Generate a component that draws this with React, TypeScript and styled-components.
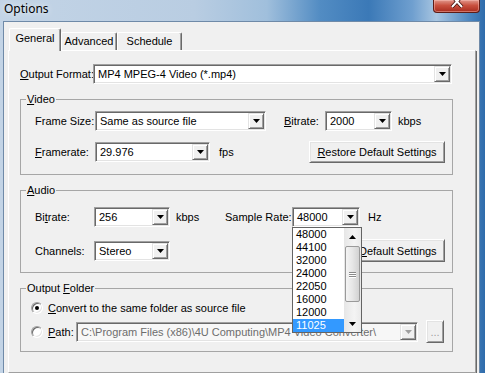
import React from 'react';
import styled, { createGlobalStyle } from 'styled-components';

const GlobalStyle = createGlobalStyle`
  html, body {
    margin: 0;
    padding: 0;
    overflow: hidden;
  }
  body {
    font-family: "Liberation Sans", Arial, sans-serif;
    font-size: 11px;
    color: #000;
  }
  * {
    box-sizing: border-box;
  }
`;

const Window = styled.div`
  width: 485px;
  height: 373px;
  overflow: hidden;
  display: flex;
  flex-direction: column;
  background: linear-gradient(
    90deg,
    #c3d4e6 0%,
    #b9cde2 40%,
    #a0bfdc 55%,
    #528cc3 66%,
    #3b79b7 76%,
    #6f9fcf 85%,
    #a9c6e1 90%,
    #4a84bf 97%,
    #2f6cab 100%
  );
`;

const TitleBar = styled.div`
  height: 21px;
  flex: none;
  display: flex;
  justify-content: space-between;
  align-items: flex-start;
`;

const Title = styled.div`
  font-family: "Noto Sans", "Open Sans", sans-serif;
  font-size: 12px;
  line-height: 16px;
  padding: 1px 0 0 4px;
  text-shadow: 0 0 6px rgba(255, 255, 255, 0.9);
`;

const CloseButton = styled.div`
  width: 47px;
  height: 13px;
  margin-right: 5px;
  border: 1px solid #5e1c16;
  border-top: none;
  border-radius: 0 0 4px 4px;
  background: linear-gradient(#e0978b, #c9513f 45%, #a72b1d);
  box-shadow: inset 0 0 0 1px rgba(255, 200, 190, 0.45);
  display: flex;
  justify-content: center;
  align-items: flex-start;
`;

const Client = styled.div`
  flex: 1;
  margin: 0 5px 0 3px;
  background: #f0f0f0;
  border: 1px solid #6f8aa8;
  border-bottom: none;
  display: flex;
  flex-direction: column;
  padding-top: 6px;
`;

const TabRow = styled.div`
  display: flex;
  align-items: flex-end;
  height: 22px;
  padding-left: 5px;
  flex: none;
`;

const Tab = styled.div<{ $w: number; $active?: boolean }>`
  width: ${(p) => p.$w}px;
  height: ${(p) => (p.$active ? 23 : 18)}px;
  margin-bottom: ${(p) => (p.$active ? -1 : 0)}px;
  border: 1px solid;
  border-color: #fff #696969 transparent #fff;
  border-bottom: none;
  border-radius: 2px 2px 0 0;
  box-shadow: inset -1px 0 0 #a0a0a0;
  background: #f0f0f0;
  text-align: center;
  line-height: 13px;
  padding-top: ${(p) => (p.$active ? 3 : 2)}px;
  position: relative;
  z-index: ${(p) => (p.$active ? 1 : 0)};
`;

const Panel = styled.div`
  flex: 1;
  margin: 0 3px 0 4px;
  border: 1px solid;
  border-color: #fff #a0a0a0 #a0a0a0 #fff;
  box-shadow: 1px 1px 0 #696969;
  padding: 13px 22px 0 11px;
`;

const Row = styled.div<{ $h?: number; $gap?: number }>`
  display: flex;
  align-items: center;
  height: ${(p) => p.$h ?? 20}px;
  margin-top: ${(p) => p.$gap ?? 0}px;
`;

const Label = styled.span<{ $w?: number; $ml?: number; $dim?: boolean }>`
  flex: none;
  white-space: nowrap;
  width: ${(p) => (p.$w ? `${p.$w}px` : 'auto')};
  margin-left: ${(p) => p.$ml ?? 0}px;
  color: ${(p) => (p.$dim ? '#6d6d6d' : '#000')};
`;

const Combo = styled.div<{ $w: number; $disabled?: boolean }>`
  flex: none;
  width: ${(p) => p.$w}px;
  height: 20px;
  display: flex;
  align-items: center;
  border: 1px solid;
  border-color: #a0a0a0 #fff #fff #a0a0a0;
  box-shadow: inset 1px 1px 0 #696969, inset -1px -1px 0 #e3e3e3;
  background: ${(p) => (p.$disabled ? '#f7f7f7' : '#fff')};
  color: ${(p) => (p.$disabled ? '#6d6d6d' : '#000')};
  padding: 1px;
`;

const ComboText = styled.span`
  flex: 1;
  padding-left: 3px;
  white-space: nowrap;
  overflow: hidden;
`;

const ArrowButton = styled.span`
  flex: none;
  width: 16px;
  height: 16px;
  border: 1px solid;
  border-color: #e3e3e3 #696969 #696969 #e3e3e3;
  box-shadow: inset 1px 1px 0 #fff, inset -1px -1px 0 #a0a0a0;
  background: #f0f0f0;
  display: flex;
  align-items: center;
  justify-content: center;
`;

const PushButton = styled.div<{ $w: number; $h: number; $dim?: boolean }>`
  flex: none;
  width: ${(p) => p.$w}px;
  height: ${(p) => p.$h}px;
  margin-left: auto;
  border: 1px solid;
  border-color: #fff #696969 #696969 #fff;
  box-shadow: inset 1px 1px 0 #e3e3e3, inset -1px -1px 0 #a0a0a0;
  background: #f0f0f0;
  color: ${(p) => (p.$dim ? '#a0a0a0' : '#000')};
  display: flex;
  align-items: center;
  justify-content: center;
  white-space: nowrap;
`;

const Group = styled.fieldset<{ $pad: string }>`
  margin: 9px 0 0;
  padding: ${(p) => p.$pad};
  min-width: 0;
  border: 1px solid #a6a6a6;
`;

const Legend = styled.legend<{ $ml: number }>`
  padding: 0 1px;
  margin-left: ${(p) => p.$ml}px;
  line-height: 13px;
`;

const Radio = styled.span`
  flex: none;
  width: 12px;
  height: 12px;
  border-radius: 50%;
  border: 1px solid;
  border-color: #a0a0a0 #fff #fff #a0a0a0;
  box-shadow: inset 1px 1px 0 #696969, inset -1px -1px 0 #e3e3e3;
  background: #fff;
  display: flex;
  align-items: center;
  justify-content: center;
  margin-right: 5px;
`;

const RadioDot = styled.span`
  width: 4px;
  height: 4px;
  border-radius: 50%;
  background: #000;
`;

const ComboWrap = styled.div`
  position: relative;
  flex: none;
`;

const DropList = styled.div`
  position: absolute;
  top: 100%;
  left: 0;
  width: 70px;
  height: 106px;
  border: 1px solid #646464;
  background: #fff;
  display: flex;
  z-index: 5;
`;

const Options = styled.div`
  flex: 1;
  display: flex;
  flex-direction: column;
`;

const Option = styled.div<{ $sel?: boolean }>`
  height: 13px;
  line-height: 13px;
  padding-left: 3px;
  background: ${(p) => (p.$sel ? '#3399ff' : 'transparent')};
  color: ${(p) => (p.$sel ? '#fff' : '#000')};
`;

const ScrollBar = styled.div`
  width: 17px;
  flex: none;
  display: flex;
  flex-direction: column;
  background: linear-gradient(90deg, #e6e6e6, #f4f4f4 60%, #eaeaea);
`;

const ScrollArrow = styled.div`
  height: 17px;
  flex: none;
  display: flex;
  align-items: center;
  justify-content: center;
`;

const Track = styled.div`
  flex: 1;
  display: flex;
  flex-direction: column;
  padding-top: 1px;
`;

const Thumb = styled.div`
  height: 56px;
  margin: 0 1px;
  border: 1px solid #9a9a9a;
  border-radius: 2px;
  background: linear-gradient(90deg, #f4f4f4, #e6e6e6 50%, #d2d2d2);
  display: flex;
  flex-direction: column;
  align-items: center;
  justify-content: center;
  gap: 1px;
`;

const Grip = styled.span`
  width: 7px;
  height: 1px;
  background: #8a8a8a;
  box-shadow: 0 1px 0 #fff;
`;

const Arrow = ({ up, color = '#000' }: { up?: boolean; color?: string }) => (
  <svg width="7" height="4" viewBox="0 0 7 4">
    <polygon points={up ? '0,4 7,4 3.5,0' : '0,0 7,0 3.5,4'} fill={color} />
  </svg>
);

const Select = ({ w, value, disabled }: { w: number; value: string; disabled?: boolean }) => (
  <Combo $w={w} $disabled={disabled}>
    <ComboText>{value}</ComboText>
    <ArrowButton>
      <Arrow color={disabled ? '#a0a0a0' : '#000'} />
    </ArrowButton>
  </Combo>
);

const rates = ['48000', '44100', '32000', '24000', '22050', '16000', '12000', '11025'];

export default function App() {
  return (
    <>
      <GlobalStyle />
      <Window>
        <TitleBar>
          <Title>Options</Title>
          <CloseButton>
            <svg width="14" height="8" viewBox="0 0 14 8">
              <path d="M2 -4 L12 7 M12 -4 L2 7" stroke="#3a0d08" strokeWidth="3.5" />
              <path d="M2 -4 L12 7 M12 -4 L2 7" stroke="#fff" strokeWidth="2" />
            </svg>
          </CloseButton>
        </TitleBar>
        <Client>
          <TabRow>
            <Tab $w={52} $active>General</Tab>
            <Tab $w={56}>Advanced</Tab>
            <Tab $w={65}>Schedule</Tab>
          </TabRow>
          <Panel>
            <Row>
              <Label $w={73}>
                <u>O</u>utput Format:
              </Label>
              <Select w={359} value="MP4 MPEG-4 Video (*.mp4)" />
            </Row>

            <Group $pad="5px 7px 11px 14px">
              <Legend $ml={-9}>
                <u>V</u>ideo
              </Legend>
              <Row>
                <Label $w={60}>Frame Size:</Label>
                <Select w={171} value="Same as source file" />
                <Label $w={41} $ml={18}>
                  <u>B</u>itrate:
                </Label>
                <Select w={67} value="2000" />
                <Label $ml={6}>kbps</Label>
              </Row>
              <Row $h={22} $gap={10}>
                <Label $w={60}>
                  <u>F</u>ramerate:
                </Label>
                <Select w={115} value="29.976" />
                <Label $ml={9}>fps</Label>
                <PushButton $w={136} $h={22}>
                  <span>
                    <u>R</u>estore Default Settings
                  </span>
                </PushButton>
              </Row>
            </Group>

            <Group $pad="10px 7px 10px 14px">
              <Legend $ml={-9}>
                <u>A</u>udio
              </Legend>
              <Row>
                <Label $w={59}>
                  Bi<u>t</u>rate:
                </Label>
                <Select w={76} value="256" />
                <Label $w={49} $ml={6}>
                  kbps
                </Label>
                <Label $w={67}>Sample Rate:</Label>
                <ComboWrap>
                  <Select w={68} value="48000" />
                  <DropList>
                    <Options>
                      {rates.map((r) => (
                        <Option key={r} $sel={r === '11025'}>
                          {r}
                        </Option>
                      ))}
                    </Options>
                    <ScrollBar>
                      <ScrollArrow>
                        <Arrow up />
                      </ScrollArrow>
                      <Track>
                        <Thumb>
                          <Grip />
                          <Grip />
                          <Grip />
                        </Thumb>
                      </Track>
                      <ScrollArrow>
                        <Arrow />
                      </ScrollArrow>
                    </ScrollBar>
                  </DropList>
                </ComboWrap>
                <Label $ml={8}>Hz</Label>
              </Row>
              <Row $h={23} $gap={12}>
                <Label $w={59}>Channels:</Label>
                <Select w={76} value="Stereo" />
                <PushButton $w={136} $h={23}>
                  <span>
                    Restore <u>D</u>efault Settings
                  </span>
                </PushButton>
              </Row>
            </Group>

            <Group $pad="5px 7px 8px 10px">
              <Legend $ml={-5}>
                Output <u>F</u>older
              </Legend>
              <Row $h={16}>
                <Radio>
                  <RadioDot />
                </Radio>
                <Label>
                  <u>C</u>onvert to the same folder as source file
                </Label>
              </Row>
              <Row $h={23} $gap={4}>
                <Radio />
                <Label $w={28}>
                  <u>P</u>ath:
                </Label>
                <Select w={342} value="C:\Program Files (x86)\4U Computing\MP4 Video Converter\" disabled />
                <PushButton $w={18} $h={23} $dim style={{ marginLeft: 8 }}>
                  ...
                </PushButton>
              </Row>
            </Group>
          </Panel>
        </Client>
      </Window>
    </>
  );
}
